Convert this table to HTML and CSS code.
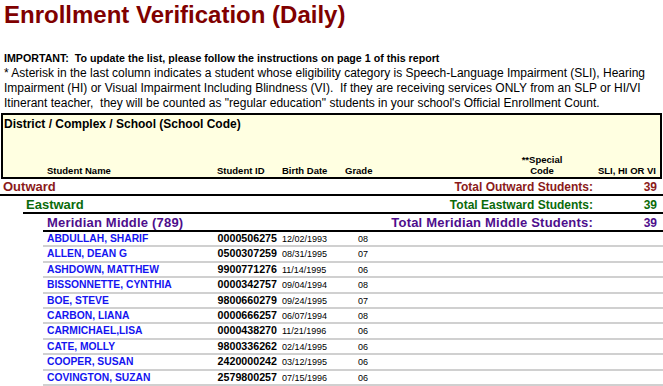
FILE: index.html
```html
<!DOCTYPE html>
<html>
<head>
<meta charset="utf-8">
<link rel="stylesheet" href="styles.css">
</head>
<body>
<h1 class="title">Enrollment Verification (Daily)</h1>
<p class="important">IMPORTANT:&nbsp; To update the list, please follow the instructions on page 1 of this report</p>
<p class="note">* Asterisk in the last column indicates a student whose eligibility category is Speech-Language Impairment (SLI), Hearing<br>Impairment (HI) or Visual Impairment Including Blindness (VI).&nbsp; If they are receiving services ONLY from an SLP or HI/VI<br>Itinerant teacher,&nbsp; they will be counted as "regular education" students in your school's Official Enrollment Count.</p>
<div class="header-box">
  <div class="hb-title">District / Complex / School (School Code)</div>
  <div class="hb-cols">
    <span></span>
    <span>Student Name</span>
    <span>Student ID</span>
    <span>Birth Date</span>
    <span>Grade</span>
    <span class="hb-center">**Special<br>Code</span>
    <span class="hb-right">SLI, HI OR VI</span>
  </div>
</div>
<div class="group outward">
  <span class="gname">Outward</span>
  <span class="glabel">Total Outward Students:</span>
  <span class="gcount">39</span>
</div>
<div class="group eastward">
  <span class="gname">Eastward</span>
  <span class="glabel">Total Eastward Students:</span>
  <span class="gcount">39</span>
</div>
<div class="group school">
  <span class="gname">Meridian Middle (789)</span>
  <span class="glabel">Total Meridian Middle Students:</span>
  <span class="gcount">39</span>
</div>
<div class="students">
  <div class="student"><span class="sname">ABDULLAH, SHARIF</span><span class="sid">0000506275</span><span class="sdob">12/02/1993</span><span class="sgrade">08</span></div>
  <div class="student"><span class="sname">ALLEN, DEAN G</span><span class="sid">0500307259</span><span class="sdob">08/31/1995</span><span class="sgrade">07</span></div>
  <div class="student"><span class="sname">ASHDOWN, MATTHEW</span><span class="sid">9900771276</span><span class="sdob">11/14/1995</span><span class="sgrade">06</span></div>
  <div class="student"><span class="sname">BISSONNETTE, CYNTHIA</span><span class="sid">0000342757</span><span class="sdob">09/04/1994</span><span class="sgrade">08</span></div>
  <div class="student"><span class="sname">BOE, STEVE</span><span class="sid">9800660279</span><span class="sdob">09/24/1995</span><span class="sgrade">07</span></div>
  <div class="student"><span class="sname">CARBON, LIANA</span><span class="sid">0000666257</span><span class="sdob">06/07/1994</span><span class="sgrade">08</span></div>
  <div class="student"><span class="sname">CARMICHAEL,LISA</span><span class="sid">0000438270</span><span class="sdob">11/21/1996</span><span class="sgrade">06</span></div>
  <div class="student"><span class="sname">CATE, MOLLY</span><span class="sid">9800336262</span><span class="sdob">02/14/1995</span><span class="sgrade">06</span></div>
  <div class="student"><span class="sname">COOPER, SUSAN</span><span class="sid">2420000242</span><span class="sdob">03/12/1995</span><span class="sgrade">06</span></div>
  <div class="student"><span class="sname">COVINGTON, SUZAN</span><span class="sid">2579800257</span><span class="sdob">07/15/1996</span><span class="sgrade">06</span></div>
</div>
</body>
</html>
```
FILE: styles.css
```css
html, body {
  margin: 0;
  padding: 0;
  background: #fff;
}
body {
  font-family: "Liberation Sans", Arial, sans-serif;
  color: #000;
  width: 663px;
}
.title {
  margin: 0;
  padding: 1px 0 0 4px;
  font-size: 24px;
  line-height: 28px;
  font-weight: bold;
  color: #800000;
}
.important {
  margin: 22px 0 0;
  padding-left: 4px;
  font-size: 10.67px;
  line-height: 15px;
  font-weight: bold;
}
.note {
  margin: 0;
  padding-left: 4px;
  font-size: 12px;
  line-height: 15px;
}
.header-box {
  margin: 2px 0 0 1px;
  width: 656px;
  height: 62px;
  border: 2px solid #000;
  background: #ffffe1;
  padding-left: 1px;
  box-sizing: content-box;
  display: flex;
  flex-direction: column;
  justify-content: space-between;
}
.hb-title {
  padding-top: 2px;
  font-size: 12px;
  line-height: 14px;
  font-weight: bold;
}
.hb-cols {
  display: grid;
  grid-template-columns: 43px 170px 65px 63px 157px 80px 1fr;
  align-items: end;
  font-size: 9.5px;
  line-height: 11px;
  font-weight: bold;
  padding-bottom: 1px;
}
.hb-center {
  text-align: center;
}
.hb-right {
  text-align: right;
  padding-right: 4px;
}
.group {
  display: flex;
  align-items: baseline;
  border-bottom: 2px solid #000;
  line-height: 14px;
  font-weight: bold;
}
.gname {
  flex: 1;
  font-size: 13px;
}
.glabel {
  font-size: 12px;
  text-align: right;
}
.gcount {
  width: 70px;
  box-sizing: border-box;
  padding-right: 6px;
  text-align: right;
  font-size: 12px;
}
.outward {
  padding-top: 1px;
  color: #8b1a1a;
}
.outward .gname {
  padding-left: 3px;
}
.eastward {
  margin-left: 23px;
  padding-top: 2px;
  color: #0b6b0b;
}
.eastward .gname {
  padding-left: 3px;
}
.school {
  margin-left: 43px;
  padding-top: 2px;
  color: #4e0e8c;
}
.school .gname {
  padding-left: 4px;
  letter-spacing: 0.2px;
}
.school .glabel {
  font-size: 13px;
  letter-spacing: 0.2px;
}
.students {
  margin-left: 43px;
}
.student {
  display: grid;
  grid-template-columns: 160px 70px 76px 1fr;
  align-items: baseline;
  padding-left: 4px;
  height: 13.4px;
  line-height: 13.4px;
  border-bottom: 2px solid #d0d0d0;
  white-space: nowrap;
}
.sname {
  color: #1414f0;
  font-size: 10.3px;
  font-weight: bold;
}
.sid {
  text-align: right;
  font-weight: bold;
  font-size: 10.7px;
}
.sdob {
  padding-left: 5px;
  font-size: 9px;
}
.sgrade {
  padding-left: 5px;
  font-size: 9px;
}
```
